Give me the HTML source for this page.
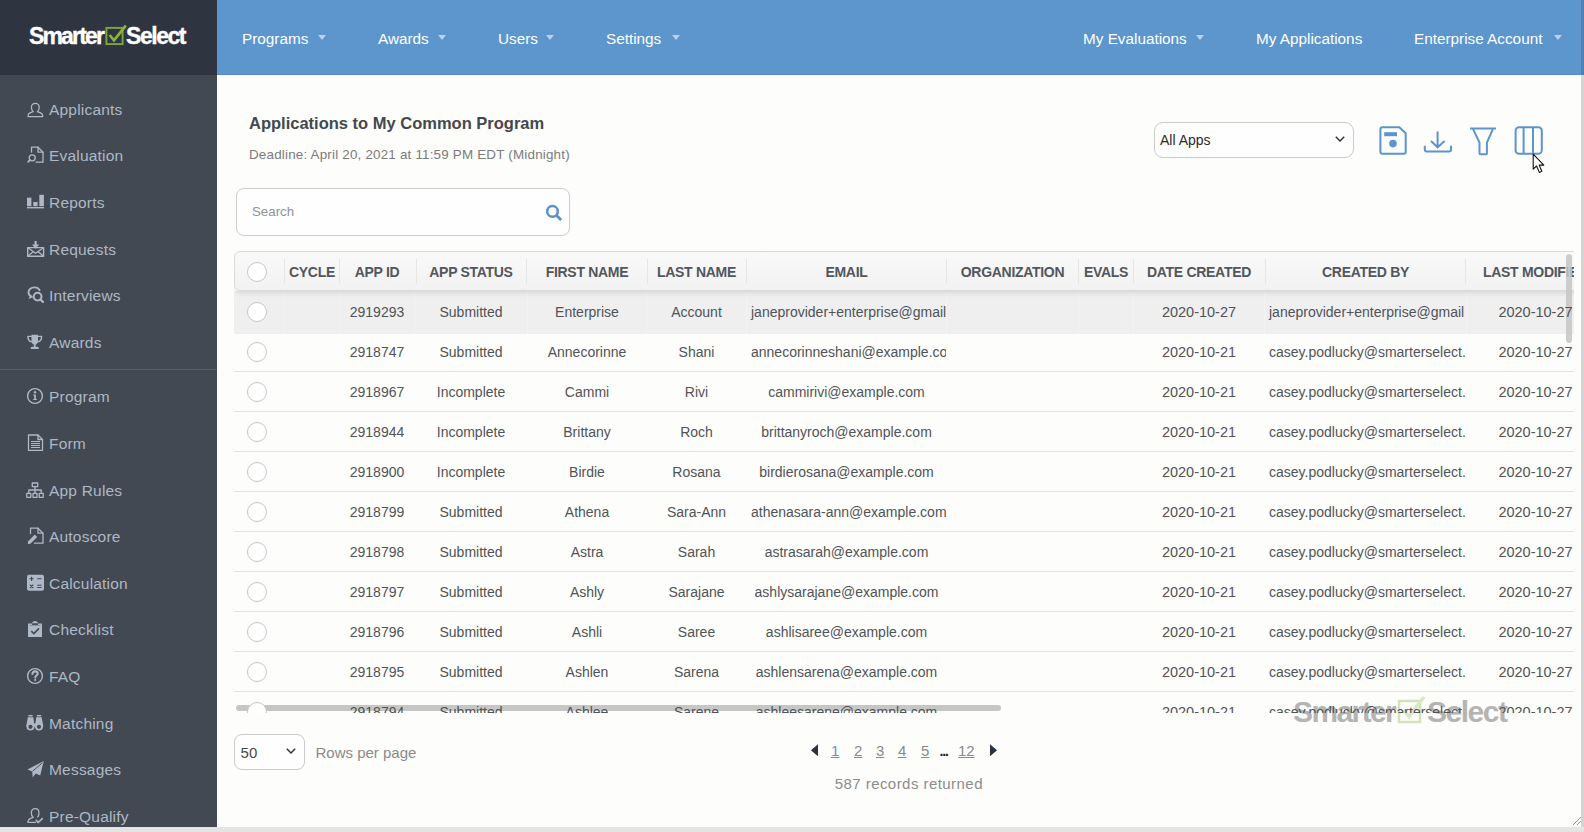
<!DOCTYPE html><html><head><meta charset="utf-8"><style>
*{box-sizing:border-box;margin:0;padding:0}
html,body{width:1584px;height:832px;overflow:hidden;background:#fdfdfc;font-family:"Liberation Sans",sans-serif;position:relative}
.a{position:absolute;white-space:nowrap}
.t{position:absolute;white-space:nowrap;line-height:0}
svg{position:absolute;overflow:visible}
#side{position:absolute;left:0;top:0;width:217px;height:827px;background:#424953}
#logo{position:absolute;left:0;top:0;width:217px;height:75px;background:#2f3540}
#nav{position:absolute;left:217px;top:0;width:1364px;height:75px;background:#5c96cc;border-bottom:1px solid #5689bd}
#edge{position:absolute;left:1581px;top:75px;width:3px;height:757px;background:#d4d4d4}
#edge2{position:absolute;left:1581px;top:0;width:3px;height:75px;background:#4c80b3}
#bottom{position:absolute;left:0;top:827px;width:1584px;height:5px;background:#e4e4e4}
.si{color:#b6bfcb}
.ni{color:#fff}
.caret{position:absolute;top:35px;width:0;height:0;border-left:4.5px solid transparent;border-right:4.5px solid transparent;border-top:5px solid #b9d3ee}
.hd{position:absolute;top:1px;height:39px;line-height:41px;font-size:14px;letter-spacing:-0.3px;font-weight:bold;color:#52575c;text-align:center;white-space:nowrap;overflow:hidden}
.cl{position:absolute;height:40px;line-height:40px;font-size:14px;color:#505357;text-align:center;white-space:nowrap;overflow:hidden;padding:0 4px}
.cb{position:absolute;left:13px;width:20px;height:20px;border:1px solid #c6c6c6;border-radius:50%;background:#fff}
</style></head><body>
<div id="side"></div><div id="logo"></div><div id="nav"></div><div id="edge"></div><div id="edge2"></div><div id="bottom"></div>
<div class="t" style="left:29px;top:36.33px;font-size:23px;font-weight:bold;color:#fff;letter-spacing:-1.85px;-webkit-text-stroke:0.35px #fff">Smarter</div>
<div class="t" style="left:126px;top:36.33px;font-size:23px;font-weight:bold;color:#fff;letter-spacing:-1.45px;-webkit-text-stroke:0.35px #fff">Select</div>
<svg style="left:104px;top:23px" width="24" height="24" viewBox="0 0 24 24"><rect x="2.4" y="4.9" width="16.2" height="16.2" fill="none" stroke="#7fa63c" stroke-width="1.9"/><path d="M5.6 12 L10 17.3 L21.8 2.6" fill="none" stroke="#8ab43d" stroke-width="2.7"/></svg>
<div class="t" style="left:242px;top:38.70px;font-size:15.3px;color:#fff">Programs</div>
<div class="caret" style="left:318px"></div>
<div class="t" style="left:378px;top:38.70px;font-size:15.3px;color:#fff">Awards</div>
<div class="caret" style="left:438px"></div>
<div class="t" style="left:498px;top:38.70px;font-size:15.3px;color:#fff">Users</div>
<div class="caret" style="left:546px"></div>
<div class="t" style="left:606px;top:38.70px;font-size:15.3px;color:#fff">Settings</div>
<div class="caret" style="left:672px"></div>
<div class="t" style="left:1083px;top:38.70px;font-size:15.3px;color:#fff">My Evaluations</div>
<div class="caret" style="left:1196px"></div>
<div class="t" style="left:1256px;top:38.70px;font-size:15.3px;color:#fff">My Applications</div>
<div class="t" style="left:1414px;top:38.70px;font-size:15.3px;color:#fff">Enterprise Account</div>
<div class="caret" style="left:1554px"></div>
<div class="t" style="left:49px;top:109.63px;font-size:15.5px;color:#aeb8c5;letter-spacing:0.2px">Applicants</div>
<div class="t" style="left:49px;top:155.63px;font-size:15.5px;color:#aeb8c5;letter-spacing:0.2px">Evaluation</div>
<div class="t" style="left:49px;top:202.63px;font-size:15.5px;color:#aeb8c5;letter-spacing:0.2px">Reports</div>
<div class="t" style="left:49px;top:249.63px;font-size:15.5px;color:#aeb8c5;letter-spacing:0.2px">Requests</div>
<div class="t" style="left:49px;top:295.63px;font-size:15.5px;color:#aeb8c5;letter-spacing:0.2px">Interviews</div>
<div class="t" style="left:49px;top:342.63px;font-size:15.5px;color:#aeb8c5;letter-spacing:0.2px">Awards</div>
<div class="t" style="left:49px;top:396.63px;font-size:15.5px;color:#aeb8c5;letter-spacing:0.2px">Program</div>
<div class="t" style="left:49px;top:443.63px;font-size:15.5px;color:#aeb8c5;letter-spacing:0.2px">Form</div>
<div class="t" style="left:49px;top:490.63px;font-size:15.5px;color:#aeb8c5;letter-spacing:0.2px">App Rules</div>
<div class="t" style="left:49px;top:536.63px;font-size:15.5px;color:#aeb8c5;letter-spacing:0.2px">Autoscore</div>
<div class="t" style="left:49px;top:583.63px;font-size:15.5px;color:#aeb8c5;letter-spacing:0.2px">Calculation</div>
<div class="t" style="left:49px;top:629.63px;font-size:15.5px;color:#aeb8c5;letter-spacing:0.2px">Checklist</div>
<div class="t" style="left:49px;top:676.63px;font-size:15.5px;color:#aeb8c5;letter-spacing:0.2px">FAQ</div>
<div class="t" style="left:49px;top:723.63px;font-size:15.5px;color:#aeb8c5;letter-spacing:0.2px">Matching</div>
<div class="t" style="left:49px;top:769.63px;font-size:15.5px;color:#aeb8c5;letter-spacing:0.2px">Messages</div>
<div class="t" style="left:49px;top:816.63px;font-size:15.5px;color:#aeb8c5;letter-spacing:0.2px">Pre-Qualify</div>
<div class="a" style="left:0;top:369px;width:217px;height:1px;background:#575e68"></div>
<svg style="left:27px;top:102px" width="18" height="18" viewBox="0 0 18 18" stroke-width="1.3"><path fill="none" stroke="#aeb8c6" stroke-linejoin="round" stroke-linecap="round" d="M6.2 9.6 C4.6 8.6 4.4 7 4.4 5.3 C4.4 2.9 6.1 1.3 8.3 1.3 C10.5 1.3 12.2 2.9 12.2 5.3 C12.2 7 12 8.6 10.4 9.6 L13.6 10.9 C15 11.5 15.6 12.3 15.6 13.5 L15.6 14.7 L1.1 14.7 L1.1 13.5 C1.1 12.3 1.7 11.5 3 10.9 Z"/></svg>
<svg style="left:27px;top:146px" width="18" height="18" viewBox="0 0 18 18" stroke-width="1.3"><path fill="none" stroke="#aeb8c6" stroke-linejoin="round" stroke-linecap="round" d="M4.5 6 V1.2 H11 L16 6.2 V16.2 H9"/><path fill="none" stroke="#aeb8c6" stroke-linejoin="round" stroke-linecap="round" d="M11 1.2 V6.2 H16"/><circle cx="5.2" cy="11.8" r="3" fill="none" stroke="#aeb8c6" stroke-linejoin="round" stroke-linecap="round"/><path fill="none" stroke="#aeb8c6" stroke-linejoin="round" stroke-linecap="round" stroke-width="1.8" d="M3 14 L1.2 15.8"/></svg>
<svg style="left:27px;top:194px" width="18" height="18" viewBox="0 0 18 18" stroke-width="1.3"><rect x="0" y="3.7" width="4.4" height="8.5" fill="#aeb8c6"/><rect x="6.3" y="8" width="4.3" height="4.2" fill="#aeb8c6"/><rect x="12.3" y="0.8" width="4.6" height="11.4" fill="#aeb8c6"/><rect x="0" y="13" width="17" height="1.4" fill="#aeb8c6"/></svg>
<svg style="left:27px;top:240px" width="18" height="18" viewBox="0 0 18 18" stroke-width="1.3"><rect x="0.7" y="7.6" width="15.9" height="8.7" fill="none" stroke="#aeb8c6" stroke-linejoin="round" stroke-linecap="round" stroke-width="1.4"/><path fill="none" stroke="#aeb8c6" stroke-linejoin="round" stroke-linecap="round" d="M0.9 7.8 L8.6 13.2 L16.4 7.8 M1 16 L6.4 11.6 M16.3 16 L10.9 11.6"/><path fill="#aeb8c6" d="M7.5 1 H9.7 V4.6 H12.2 L8.6 8.8 L5 4.6 H7.5 Z"/></svg>
<svg style="left:27px;top:286px" width="18" height="18" viewBox="0 0 18 18" stroke-width="1.3"><path fill="none" stroke="#aeb8c6" stroke-linejoin="round" stroke-linecap="round" stroke-width="1.9" d="M4.2 10.3 C2.4 9.4 1.5 8 1.5 6.4 C1.5 3.4 4.2 1.4 7.4 1.4 C9.8 1.4 11.8 2.4 12.6 4.2"/><path fill="#aeb8c6" d="M3.2 9.2 L1.6 13 L6.6 11 Z"/><circle cx="10.6" cy="10.6" r="3.9" fill="none" stroke="#aeb8c6" stroke-linejoin="round" stroke-linecap="round" stroke-width="2"/><path fill="none" stroke="#aeb8c6" stroke-linejoin="round" stroke-linecap="round" stroke-width="2.2" d="M13.4 13.4 L16 16"/></svg>
<svg style="left:27px;top:334px" width="18" height="18" viewBox="0 0 18 18" stroke-width="1.3"><path fill="#aeb8c6" d="M4.5 0.8 H11 V6.5 C11 9.2 9.6 10.2 8.6 10.7 V12.8 H10.6 C11.3 12.8 11.8 13.4 11.8 14.3 V15 H3.7 V14.3 C3.7 13.4 4.2 12.8 4.9 12.8 H6.9 V10.7 C5.9 10.2 4.5 9.2 4.5 6.5 Z"/><path fill="none" stroke="#aeb8c6" stroke-linejoin="round" stroke-linecap="round" stroke-width="1.4" d="M4.6 2.4 H0.9 C0.9 5.6 2.4 7.4 4.8 7.8 M10.9 2.4 H14.6 C14.6 5.6 13.1 7.4 10.7 7.8"/></svg>
<svg style="left:26px;top:387px" width="18" height="18" viewBox="0 0 18 18" stroke-width="1.3"><circle cx="9" cy="9" r="7.4" fill="none" stroke="#aeb8c6" stroke-linejoin="round" stroke-linecap="round" stroke-width="1.4"/><circle cx="9" cy="5.3" r="1.2" fill="#aeb8c6"/><path fill="#aeb8c6" d="M7.2 7.4 H9.9 V11.9 H10.9 V13.1 H7.2 V11.9 H8.2 V8.6 H7.2 Z"/></svg>
<svg style="left:27px;top:434px" width="18" height="18" viewBox="0 0 18 18" stroke-width="1.3"><path fill="none" stroke="#aeb8c6" stroke-linejoin="round" stroke-linecap="round" d="M1.5 1 H11 L15.5 5.5 V16.3 H1.5 Z"/><path fill="none" stroke="#aeb8c6" stroke-linejoin="round" stroke-linecap="round" d="M11 1 V5.5 H15.5"/><path fill="#aeb8c6" d="M4 6.9 H13 V7.9 H4 Z M4 8.9 H13 V9.9 H4 Z M4 10.9 H13 V11.9 H4 Z M4 12.9 H13 V13.9 H4 Z"/></svg>
<svg style="left:26px;top:482px" width="18" height="18" viewBox="0 0 18 18" stroke-width="1.3"><rect x="6.3" y="1" width="5.4" height="3.6" fill="none" stroke="#aeb8c6" stroke-linejoin="round" stroke-linecap="round" stroke-width="1.3"/><path fill="none" stroke="#aeb8c6" stroke-linejoin="round" stroke-linecap="round" d="M9 4.6 V8 M2.8 11 V8 H15.2 V11 M9 8 V11"/><rect x="0.8" y="11.3" width="4" height="4" fill="none" stroke="#aeb8c6" stroke-linejoin="round" stroke-linecap="round"/><rect x="7" y="11.3" width="4" height="4" fill="none" stroke="#aeb8c6" stroke-linejoin="round" stroke-linecap="round"/><rect x="13.2" y="11.3" width="4" height="4" fill="none" stroke="#aeb8c6" stroke-linejoin="round" stroke-linecap="round"/></svg>
<svg style="left:27px;top:527px" width="18" height="18" viewBox="0 0 18 18" stroke-width="1.3"><path fill="none" stroke="#aeb8c6" stroke-linejoin="round" stroke-linecap="round" d="M3.5 6.5 V1.2 H11 L16 6.2 V16.2 H7.5"/><path fill="none" stroke="#aeb8c6" stroke-linejoin="round" stroke-linecap="round" d="M11 1.2 V6.2 H16"/><path fill="#aeb8c6" d="M1 14.4 L7.8 7.6 L10.2 10 L3.4 16.8 L0.8 17.1 Z"/></svg>
<svg style="left:27px;top:574px" width="18" height="18" viewBox="0 0 18 18" stroke-width="1.3"><rect x="0" y="0.8" width="17" height="16" rx="2" fill="#aeb8c6"/><path stroke="#424953" stroke-width="1.1" fill="none" d="M2.5 4.8 H6.7 M4.6 2.7 V6.9 M10.2 4.8 H14.6 M2.9 10.6 L6.3 14 M6.3 10.6 L2.9 14 M10.2 11.3 H14.6 M10.2 13.5 H14.6"/></svg>
<svg style="left:27px;top:620px" width="18" height="18" viewBox="0 0 18 18" stroke-width="1.3"><path fill="#aeb8c6" d="M1 3.5 H5 C5 2 6.5 1 8 1 C9.5 1 11 2 11 3.5 H15 V17 H1 Z"/><rect x="5" y="3.3" width="6" height="1.6" fill="#424953"/><path stroke="#424953" stroke-width="1.6" fill="none" d="M4.3 11.2 L6.9 13.6 L12 8.4"/><rect x="2.3" y="4.9" width="11.4" height="0.9" fill="#424953" opacity=".4"/></svg>
<svg style="left:26px;top:667px" width="18" height="18" viewBox="0 0 18 18" stroke-width="1.3"><circle cx="9" cy="9" r="7.4" fill="none" stroke="#aeb8c6" stroke-linejoin="round" stroke-linecap="round" stroke-width="1.4"/><path fill="none" stroke="#aeb8c6" stroke-linejoin="round" stroke-linecap="round" stroke-width="2.1" d="M6.4 7 C6.4 5.4 7.5 4.4 9 4.4 C10.6 4.4 11.7 5.4 11.7 6.7 C11.7 8.5 9.2 8.6 9.2 10.6"/><circle cx="9.2" cy="13" r="1.1" fill="#aeb8c6"/></svg>
<svg style="left:26px;top:714px" width="18" height="18" viewBox="0 0 18 18" stroke-width="1.3"><path fill="#aeb8c6" d="M2.3 1 H6.6 V2.6 H2.3 Z M10.9 1 H15.2 V2.6 H10.9 Z"/><path fill="#aeb8c6" d="M1.8 3.3 H7.3 L8.2 9.5 H9.3 L10.2 3.3 H15.7 L17.3 12.5 H0.2 Z"/><circle cx="4.5" cy="12.6" r="4" fill="#aeb8c6"/><circle cx="13" cy="12.6" r="4" fill="#aeb8c6"/><circle cx="4.5" cy="12.8" r="2.1" fill="#424953"/><circle cx="13" cy="12.8" r="2.1" fill="#424953"/><path d="M8.75 4 V9" stroke="#424953" stroke-width="0.8"/></svg>
<svg style="left:27px;top:760px" width="18" height="18" viewBox="0 0 18 18" stroke-width="1.3"><path fill="#aeb8c6" d="M16.8 1 L0.4 9.6 L5.2 11.4 L5.7 17.4 L8.7 13.6 L13.2 15.6 Z"/><path d="M5.4 11.3 L15.5 2.8" stroke="#424953" stroke-width="0.9"/></svg>
<svg style="left:26px;top:807px" width="18" height="18" viewBox="0 0 18 18" stroke-width="1.3"><path fill="none" stroke="#aeb8c6" stroke-linejoin="round" stroke-linecap="round" d="M7.2 10.4 C5.6 9.4 5.3 7.6 5.3 5.8 C5.3 3.3 7 1.6 9.2 1.6 C11.4 1.6 13 3.3 13 5.8 C13 7.4 12.8 8.9 11.6 9.9 M7.2 10.4 L4.1 11.6 C2.7 12.2 2 13 2 14.5 V15.3 H9.6"/><path fill="none" stroke="#aeb8c6" stroke-linejoin="round" stroke-linecap="round" stroke-width="1.7" d="M10.2 13.3 L12.2 15.5 L16.3 11.6"/></svg>
<div class="t" style="left:249px;top:123.08px;font-size:16.5px;font-weight:bold;color:#43484e">Applications to My Common Program</div>
<div class="t" style="left:249px;top:155.26px;font-size:13.4px;color:#7b7b7b;letter-spacing:0.2px">Deadline: April 20, 2021 at 11:59 PM EDT (Midnight)</div>
<div class="a" style="left:236px;top:188px;width:334px;height:48px;border:1px solid #cdcdcd;border-radius:8px;background:#fefefe"></div>
<div class="t" style="left:252px;top:211.89px;font-size:13.3px;color:#8d9297">Search</div>
<svg style="left:543px;top:202px" width="22" height="22" viewBox="0 0 22 22"><circle cx="9.5" cy="9.4" r="5.3" fill="none" stroke="#5890c8" stroke-width="2.5"/><path d="M13.3 13.2 L18.2 18.1" stroke="#5890c8" stroke-width="2.8" stroke-linecap="butt"/></svg>
<div class="a" style="left:1154px;top:122px;width:200px;height:36px;border:1px solid #cbcbcb;border-radius:9px;background:#fefefe"></div>
<div class="t" style="left:1160px;top:140.35px;font-size:14px;color:#2a2a2a">All Apps</div>
<svg style="left:1334px;top:135px" width="12" height="9" viewBox="0 0 12 9"><path d="M1.8 1.8 L6 6 L10.2 1.8" fill="none" stroke="#333" stroke-width="1.5"/></svg>
<svg style="left:1376px;top:123px" width="34" height="34" viewBox="0 0 34 34"><path d="M4.4 6.2 Q4.4 4.2 6.4 4.2 H23.3 L29.7 10.3 V28.8 Q29.7 30.8 27.7 30.8 H6.4 Q4.4 30.8 4.4 28.8 Z" fill="none" stroke="#5c94cb" stroke-width="2" stroke-linejoin="round"/><rect x="8.2" y="9.2" width="12.8" height="4" fill="#5c94cb"/><circle cx="17" cy="20.6" r="3.8" fill="#5c94cb"/></svg>
<svg style="left:1422px;top:123px" width="34" height="34" viewBox="0 0 34 34"><path d="M15.6 8.4 V24 M9 18 L15.6 24.3 L22.6 18" fill="none" stroke="#5c94cb" stroke-width="2"/><path d="M2.8 22.8 V26.5 Q2.8 28.5 4.8 28.5 H27 Q29 28.5 29 26.5 V22.8" fill="none" stroke="#5c94cb" stroke-width="2"/></svg>
<svg style="left:1466px;top:123px" width="34" height="34" viewBox="0 0 34 34"><path d="M4 5.5 H30" stroke="#5c94cb" stroke-width="2"/><path d="M7 5.8 L13.5 19.7 V30.3 Q13.5 31.3 14.5 31.3 H19.9 Q20.9 31.3 20.9 30.3 V19.7 L27 5.8" fill="none" stroke="#5c94cb" stroke-width="2" stroke-linejoin="round"/></svg>
<svg style="left:1512px;top:123px" width="34" height="34" viewBox="0 0 34 34"><rect x="3.6" y="4.3" width="26.2" height="26.4" rx="3.5" fill="none" stroke="#5c94cb" stroke-width="2"/><path d="M11.6 4.3 V30.7 M21 4.3 V30.7" stroke="#5c94cb" stroke-width="2"/></svg>
<svg style="left:1532px;top:153px" width="16" height="22" viewBox="0 0 16 22"><path d="M1.2 1.2 L1.2 16.2 L4.6 13 L7.3 19.4 L9.8 18.3 L7.2 12.1 L11.8 12.1 Z" fill="#fff" stroke="#111" stroke-width="1.1" stroke-linejoin="round"/></svg>
<div class="t" style="left:1293px;top:712.11px;font-size:30px;font-weight:bold;color:#b4b4b4;letter-spacing:-1.6px">Smarter</div>
<div class="t" style="left:1427px;top:712.11px;font-size:30px;font-weight:bold;color:#b4b4b4;letter-spacing:-1.5px">Select</div>
<svg style="left:1396px;top:694px" width="32" height="32" viewBox="0 0 32 32"><rect x="3" y="7" width="21" height="21" fill="none" stroke="#d3e3b8" stroke-width="2.5"/><path d="M7.5 16 L13 22.5 L28 3" fill="none" stroke="#d8e8c0" stroke-width="3.5"/></svg>
<div class="a" style="left:234px;top:251px;width:1340px;height:462px;overflow:hidden">
<div class="a" style="left:0;top:40px;width:1400px;height:43px;background:#efefef"></div>
<div class="a" style="left:0;top:120px;width:1340px;height:1px;background:#e2e2e2"></div>
<div class="a" style="left:0;top:160px;width:1340px;height:1px;background:#e2e2e2"></div>
<div class="a" style="left:0;top:200px;width:1340px;height:1px;background:#e2e2e2"></div>
<div class="a" style="left:0;top:240px;width:1340px;height:1px;background:#e2e2e2"></div>
<div class="a" style="left:0;top:280px;width:1340px;height:1px;background:#e2e2e2"></div>
<div class="a" style="left:0;top:320px;width:1340px;height:1px;background:#e2e2e2"></div>
<div class="a" style="left:0;top:360px;width:1340px;height:1px;background:#e2e2e2"></div>
<div class="a" style="left:0;top:400px;width:1340px;height:1px;background:#e2e2e2"></div>
<div class="a" style="left:0;top:440px;width:1340px;height:1px;background:#e2e2e2"></div>
<div class="a" style="left:0;top:480px;width:1340px;height:1px;background:#e2e2e2"></div>
<div class="a" style="left:50px;top:40px;width:1px;height:43px;background:#f3f3f3"></div>
<div class="a" style="left:105px;top:40px;width:1px;height:43px;background:#f3f3f3"></div>
<div class="a" style="left:180px;top:40px;width:1px;height:43px;background:#f3f3f3"></div>
<div class="a" style="left:293px;top:40px;width:1px;height:43px;background:#f3f3f3"></div>
<div class="a" style="left:412px;top:40px;width:1px;height:43px;background:#f3f3f3"></div>
<div class="a" style="left:512px;top:40px;width:1px;height:43px;background:#f3f3f3"></div>
<div class="a" style="left:712px;top:40px;width:1px;height:43px;background:#f3f3f3"></div>
<div class="a" style="left:844px;top:40px;width:1px;height:43px;background:#f3f3f3"></div>
<div class="a" style="left:899px;top:40px;width:1px;height:43px;background:#f3f3f3"></div>
<div class="a" style="left:1030px;top:40px;width:1px;height:43px;background:#f3f3f3"></div>
<div class="a" style="left:1232px;top:40px;width:1px;height:43px;background:#f3f3f3"></div>
<div class="a" style="left:0;top:0;width:1400px;height:40px;background:linear-gradient(#f9f9f9,#f2f2f2);border:1px solid #dadada;border-radius:6px;box-shadow:0 2px 5px rgba(0,0,0,.10)"></div>
<div class="a" style="left:50px;top:8px;width:1px;height:25px;background:#e6e6e6"></div>
<div class="a" style="left:105px;top:8px;width:1px;height:25px;background:#e6e6e6"></div>
<div class="a" style="left:182px;top:8px;width:1px;height:25px;background:#e6e6e6"></div>
<div class="a" style="left:292px;top:8px;width:1px;height:25px;background:#e6e6e6"></div>
<div class="a" style="left:413px;top:8px;width:1px;height:25px;background:#e6e6e6"></div>
<div class="a" style="left:512px;top:8px;width:1px;height:25px;background:#e6e6e6"></div>
<div class="a" style="left:712px;top:8px;width:1px;height:25px;background:#e6e6e6"></div>
<div class="a" style="left:844px;top:8px;width:1px;height:25px;background:#e6e6e6"></div>
<div class="a" style="left:899px;top:8px;width:1px;height:25px;background:#e6e6e6"></div>
<div class="a" style="left:1031px;top:8px;width:1px;height:25px;background:#e6e6e6"></div>
<div class="a" style="left:1231px;top:8px;width:1px;height:25px;background:#e6e6e6"></div>
<div class="hd" style="left:51px;width:54px">CYCLE</div>
<div class="hd" style="left:106px;width:74px">APP ID</div>
<div class="hd" style="left:181px;width:112px">APP STATUS</div>
<div class="hd" style="left:294px;width:118px">FIRST NAME</div>
<div class="hd" style="left:413px;width:99px">LAST NAME</div>
<div class="hd" style="left:513px;width:199px">EMAIL</div>
<div class="hd" style="left:713px;width:131px">ORGANIZATION</div>
<div class="hd" style="left:845px;width:54px">EVALS</div>
<div class="hd" style="left:900px;width:130px">DATE CREATED</div>
<div class="hd" style="left:1031px;width:201px">CREATED BY</div>
<div class="hd" style="left:1233px;width:137px">LAST MODIFIED</div>
<div class="a" style="left:2px;top:454px;width:765px;height:6px;border-radius:3px;background:#c6c6c6"></div>
<div class="a" style="left:1332px;top:3px;width:6px;height:89px;border-radius:3px;background:#c6c6c6;opacity:.85"></div>
<div class="cb" style="top:11px"></div>
<div class="cb" style="top:51px"></div>
<div class="cl" style="left:106px;top:41px;width:74px;font-size:14px">2919293</div>
<div class="cl" style="left:181px;top:41px;width:112px;font-size:14px">Submitted</div>
<div class="cl" style="left:294px;top:41px;width:118px;font-size:14px">Enterprise</div>
<div class="cl" style="left:413px;top:41px;width:99px;font-size:14px">Account</div>
<div class="cl" style="left:513px;top:41px;width:199px;font-size:14px">janeprovider+enterprise@gmail</div>
<div class="cl" style="left:900px;top:41px;width:130px;font-size:14.5px">2020-10-27</div>
<div class="cl" style="left:1031px;top:41px;width:201px;font-size:14px">janeprovider+enterprise@gmail</div>
<div class="cl" style="left:1233px;top:41px;width:137px;font-size:14.5px">2020-10-27</div>
<div class="cb" style="top:91px"></div>
<div class="cl" style="left:106px;top:81px;width:74px;font-size:14px">2918747</div>
<div class="cl" style="left:181px;top:81px;width:112px;font-size:14px">Submitted</div>
<div class="cl" style="left:294px;top:81px;width:118px;font-size:14px">Annecorinne</div>
<div class="cl" style="left:413px;top:81px;width:99px;font-size:14px">Shani</div>
<div class="cl" style="left:513px;top:81px;width:199px;font-size:14px">annecorinneshani@example.com</div>
<div class="cl" style="left:900px;top:81px;width:130px;font-size:14.5px">2020-10-21</div>
<div class="cl" style="left:1031px;top:81px;width:201px;font-size:14px">casey.podlucky@smarterselect.com</div>
<div class="cl" style="left:1233px;top:81px;width:137px;font-size:14.5px">2020-10-27</div>
<div class="cb" style="top:131px"></div>
<div class="cl" style="left:106px;top:121px;width:74px;font-size:14px">2918967</div>
<div class="cl" style="left:181px;top:121px;width:112px;font-size:14px">Incomplete</div>
<div class="cl" style="left:294px;top:121px;width:118px;font-size:14px">Cammi</div>
<div class="cl" style="left:413px;top:121px;width:99px;font-size:14px">Rivi</div>
<div class="cl" style="left:513px;top:121px;width:199px;font-size:14px">cammirivi@example.com</div>
<div class="cl" style="left:900px;top:121px;width:130px;font-size:14.5px">2020-10-21</div>
<div class="cl" style="left:1031px;top:121px;width:201px;font-size:14px">casey.podlucky@smarterselect.com</div>
<div class="cl" style="left:1233px;top:121px;width:137px;font-size:14.5px">2020-10-27</div>
<div class="cb" style="top:171px"></div>
<div class="cl" style="left:106px;top:161px;width:74px;font-size:14px">2918944</div>
<div class="cl" style="left:181px;top:161px;width:112px;font-size:14px">Incomplete</div>
<div class="cl" style="left:294px;top:161px;width:118px;font-size:14px">Brittany</div>
<div class="cl" style="left:413px;top:161px;width:99px;font-size:14px">Roch</div>
<div class="cl" style="left:513px;top:161px;width:199px;font-size:14px">brittanyroch@example.com</div>
<div class="cl" style="left:900px;top:161px;width:130px;font-size:14.5px">2020-10-21</div>
<div class="cl" style="left:1031px;top:161px;width:201px;font-size:14px">casey.podlucky@smarterselect.com</div>
<div class="cl" style="left:1233px;top:161px;width:137px;font-size:14.5px">2020-10-27</div>
<div class="cb" style="top:211px"></div>
<div class="cl" style="left:106px;top:201px;width:74px;font-size:14px">2918900</div>
<div class="cl" style="left:181px;top:201px;width:112px;font-size:14px">Incomplete</div>
<div class="cl" style="left:294px;top:201px;width:118px;font-size:14px">Birdie</div>
<div class="cl" style="left:413px;top:201px;width:99px;font-size:14px">Rosana</div>
<div class="cl" style="left:513px;top:201px;width:199px;font-size:14px">birdierosana@example.com</div>
<div class="cl" style="left:900px;top:201px;width:130px;font-size:14.5px">2020-10-21</div>
<div class="cl" style="left:1031px;top:201px;width:201px;font-size:14px">casey.podlucky@smarterselect.com</div>
<div class="cl" style="left:1233px;top:201px;width:137px;font-size:14.5px">2020-10-27</div>
<div class="cb" style="top:251px"></div>
<div class="cl" style="left:106px;top:241px;width:74px;font-size:14px">2918799</div>
<div class="cl" style="left:181px;top:241px;width:112px;font-size:14px">Submitted</div>
<div class="cl" style="left:294px;top:241px;width:118px;font-size:14px">Athena</div>
<div class="cl" style="left:413px;top:241px;width:99px;font-size:14px">Sara-Ann</div>
<div class="cl" style="left:513px;top:241px;width:199px;font-size:14px">athenasara-ann@example.com</div>
<div class="cl" style="left:900px;top:241px;width:130px;font-size:14.5px">2020-10-21</div>
<div class="cl" style="left:1031px;top:241px;width:201px;font-size:14px">casey.podlucky@smarterselect.com</div>
<div class="cl" style="left:1233px;top:241px;width:137px;font-size:14.5px">2020-10-27</div>
<div class="cb" style="top:291px"></div>
<div class="cl" style="left:106px;top:281px;width:74px;font-size:14px">2918798</div>
<div class="cl" style="left:181px;top:281px;width:112px;font-size:14px">Submitted</div>
<div class="cl" style="left:294px;top:281px;width:118px;font-size:14px">Astra</div>
<div class="cl" style="left:413px;top:281px;width:99px;font-size:14px">Sarah</div>
<div class="cl" style="left:513px;top:281px;width:199px;font-size:14px">astrasarah@example.com</div>
<div class="cl" style="left:900px;top:281px;width:130px;font-size:14.5px">2020-10-21</div>
<div class="cl" style="left:1031px;top:281px;width:201px;font-size:14px">casey.podlucky@smarterselect.com</div>
<div class="cl" style="left:1233px;top:281px;width:137px;font-size:14.5px">2020-10-27</div>
<div class="cb" style="top:331px"></div>
<div class="cl" style="left:106px;top:321px;width:74px;font-size:14px">2918797</div>
<div class="cl" style="left:181px;top:321px;width:112px;font-size:14px">Submitted</div>
<div class="cl" style="left:294px;top:321px;width:118px;font-size:14px">Ashly</div>
<div class="cl" style="left:413px;top:321px;width:99px;font-size:14px">Sarajane</div>
<div class="cl" style="left:513px;top:321px;width:199px;font-size:14px">ashlysarajane@example.com</div>
<div class="cl" style="left:900px;top:321px;width:130px;font-size:14.5px">2020-10-21</div>
<div class="cl" style="left:1031px;top:321px;width:201px;font-size:14px">casey.podlucky@smarterselect.com</div>
<div class="cl" style="left:1233px;top:321px;width:137px;font-size:14.5px">2020-10-27</div>
<div class="cb" style="top:371px"></div>
<div class="cl" style="left:106px;top:361px;width:74px;font-size:14px">2918796</div>
<div class="cl" style="left:181px;top:361px;width:112px;font-size:14px">Submitted</div>
<div class="cl" style="left:294px;top:361px;width:118px;font-size:14px">Ashli</div>
<div class="cl" style="left:413px;top:361px;width:99px;font-size:14px">Saree</div>
<div class="cl" style="left:513px;top:361px;width:199px;font-size:14px">ashlisaree@example.com</div>
<div class="cl" style="left:900px;top:361px;width:130px;font-size:14.5px">2020-10-21</div>
<div class="cl" style="left:1031px;top:361px;width:201px;font-size:14px">casey.podlucky@smarterselect.com</div>
<div class="cl" style="left:1233px;top:361px;width:137px;font-size:14.5px">2020-10-27</div>
<div class="cb" style="top:411px"></div>
<div class="cl" style="left:106px;top:401px;width:74px;font-size:14px">2918795</div>
<div class="cl" style="left:181px;top:401px;width:112px;font-size:14px">Submitted</div>
<div class="cl" style="left:294px;top:401px;width:118px;font-size:14px">Ashlen</div>
<div class="cl" style="left:413px;top:401px;width:99px;font-size:14px">Sarena</div>
<div class="cl" style="left:513px;top:401px;width:199px;font-size:14px">ashlensarena@example.com</div>
<div class="cl" style="left:900px;top:401px;width:130px;font-size:14.5px">2020-10-21</div>
<div class="cl" style="left:1031px;top:401px;width:201px;font-size:14px">casey.podlucky@smarterselect.com</div>
<div class="cl" style="left:1233px;top:401px;width:137px;font-size:14.5px">2020-10-27</div>
<div class="cb" style="top:451px"></div>
<div class="cl" style="left:106px;top:441px;width:74px;font-size:14px">2918794</div>
<div class="cl" style="left:181px;top:441px;width:112px;font-size:14px">Submitted</div>
<div class="cl" style="left:294px;top:441px;width:118px;font-size:14px">Ashlee</div>
<div class="cl" style="left:413px;top:441px;width:99px;font-size:14px">Sarene</div>
<div class="cl" style="left:513px;top:441px;width:199px;font-size:14px">ashleesarene@example.com</div>
<div class="cl" style="left:900px;top:441px;width:130px;font-size:14.5px">2020-10-21</div>
<div class="cl" style="left:1031px;top:441px;width:201px;font-size:14px">casey.podlucky@smarterselect.com</div>
<div class="cl" style="left:1233px;top:441px;width:137px;font-size:14.5px">2020-10-27</div>
</div>
<div class="a" style="left:234px;top:734px;width:71px;height:36px;border:1px solid #cbcbcb;border-radius:8px;background:#fefefe"></div>
<div class="t" style="left:240.6px;top:752.50px;font-size:15px;color:#4a4a4a">50</div>
<svg style="left:285px;top:747px" width="12" height="9" viewBox="0 0 12 9"><path d="M1.8 1.8 L6 6 L10.2 1.8" fill="none" stroke="#333" stroke-width="1.5"/></svg>
<div class="t" style="left:315.5px;top:752.50px;font-size:15px;color:#8a8a8a">Rows per page</div>
<svg style="left:808px;top:742px" width="12" height="16" viewBox="0 0 12 16"><path d="M10 2.3 L2.9 8.2 L10 14.2 Z" fill="#2b3340"/></svg>
<svg style="left:988px;top:742px" width="12" height="16" viewBox="0 0 12 16"><path d="M2 2.3 L9.1 8.2 L2 14.2 Z" fill="#2b3340"/></svg>
<div class="t" style="left:831px;top:750.60px;font-size:15px;color:#5b93c9;text-decoration:underline">1</div>
<div class="t" style="left:854px;top:750.60px;font-size:15px;color:#8a8a8a;text-decoration:underline">2</div>
<div class="t" style="left:876px;top:750.60px;font-size:15px;color:#8a8a8a;text-decoration:underline">3</div>
<div class="t" style="left:898px;top:750.60px;font-size:15px;color:#8a8a8a;text-decoration:underline">4</div>
<div class="t" style="left:921px;top:750.60px;font-size:15px;color:#8a8a8a;text-decoration:underline">5</div>
<div class="t" style="left:958px;top:750.60px;font-size:15px;color:#8a8a8a;text-decoration:underline">12</div>
<div class="t" style="left:939.5px;top:750.75px;font-size:14px;color:#222;letter-spacing:-1.2px;font-weight:bold">...</div>
<div class="t" style="left:834.7px;top:783.50px;font-size:15px;color:#8c8c8c;letter-spacing:0.45px">587 records returned</div>
<svg style="left:1570px;top:814px" width="12" height="12" viewBox="0 0 12 12"><path d="M11 3 L3 11 M11 7 L7 11" stroke="#999" stroke-width="1"/></svg>
</body></html>
